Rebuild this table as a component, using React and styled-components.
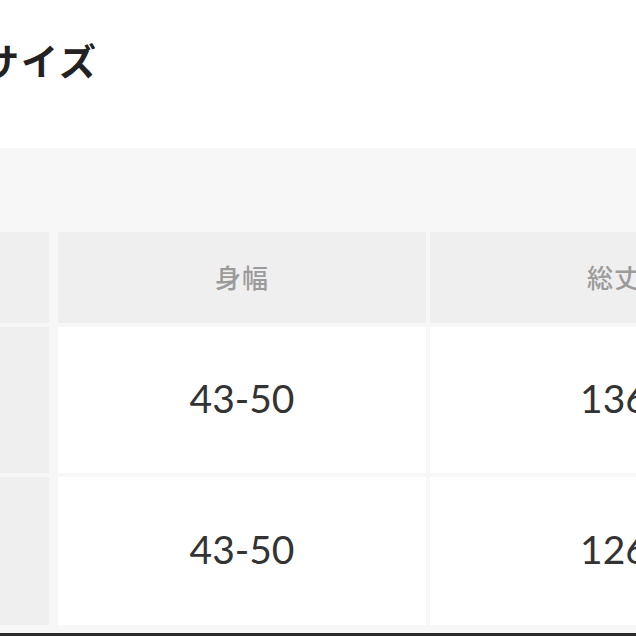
import React from "react";
import styled, { createGlobalStyle } from "styled-components";

const Global = createGlobalStyle`
  html, body { margin: 0; padding: 0; background: #fff; overflow: hidden; }
  body { font-family: "Noto Sans CJK JP", "Noto Sans", sans-serif; }
`;

const Page = styled.div`
  width: 636px;
  height: 636px;
  overflow: hidden;
  display: flex;
  flex-direction: column;
`;

const TitleBar = styled.div`
  height: 148px;
  box-sizing: border-box;
  padding-top: 42px;
`;

const Title = styled.h2`
  margin: 0 0 0 -18px;
  font-family: "Noto Sans CJK JP", sans-serif;
  font-weight: 700;
  font-size: 37px;
  line-height: 1;
  letter-spacing: 2px;
  color: #222;
  white-space: nowrap;
`;

const Panel = styled.div`
  background: #f7f7f7;
  padding: 84px 0 8px;
  border-bottom: 3px solid #2a2a2a;
  width: 900px;
`;

const Grid = styled.div`
  display: grid;
  grid-template-columns: 54px 368px 368px;
  grid-template-rows: 91px 146px 148px;
  column-gap: 4px;
  row-gap: 4px;
`;

const Cell = styled.div`
  display: flex;
  align-items: center;
  justify-content: center;
  background: ${(p) => (p.$head ? "#efefef" : "#ffffff")};
  margin-right: ${(p) => (p.$side ? "5px" : "0")};
`;

const HeadText = styled.span`
  font-family: "Noto Sans CJK JP", sans-serif;
  font-size: 26px;
  font-weight: 500;
  color: #9b9b9b;
  letter-spacing: 1px;
  margin-top: -3px;
`;

const ValueText = styled.span`
  font-family: Lato, "Noto Sans", sans-serif;
  font-size: 39px;
  font-weight: 400;
  color: #333;
  margin-top: -4px;
`;

const columns = ["身幅", "総丈"];
const rows = [
  ["43-50", "136"],
  ["43-50", "126"],
];

export default function App() {
  return (
    <Page>
      <Global />
      <TitleBar>
        <Title>サイズ</Title>
      </TitleBar>
      <Panel>
        <Grid>
          <Cell $head $side />
          {columns.map((c) => (
            <Cell $head key={c}>
              <HeadText>{c}</HeadText>
            </Cell>
          ))}
          {rows.map((r, i) => (
            <React.Fragment key={i}>
              <Cell $head $side />
              {r.map((v, j) => (
                <Cell key={j}>
                  <ValueText>{v}</ValueText>
                </Cell>
              ))}
            </React.Fragment>
          ))}
        </Grid>
      </Panel>
    </Page>
  );
}
